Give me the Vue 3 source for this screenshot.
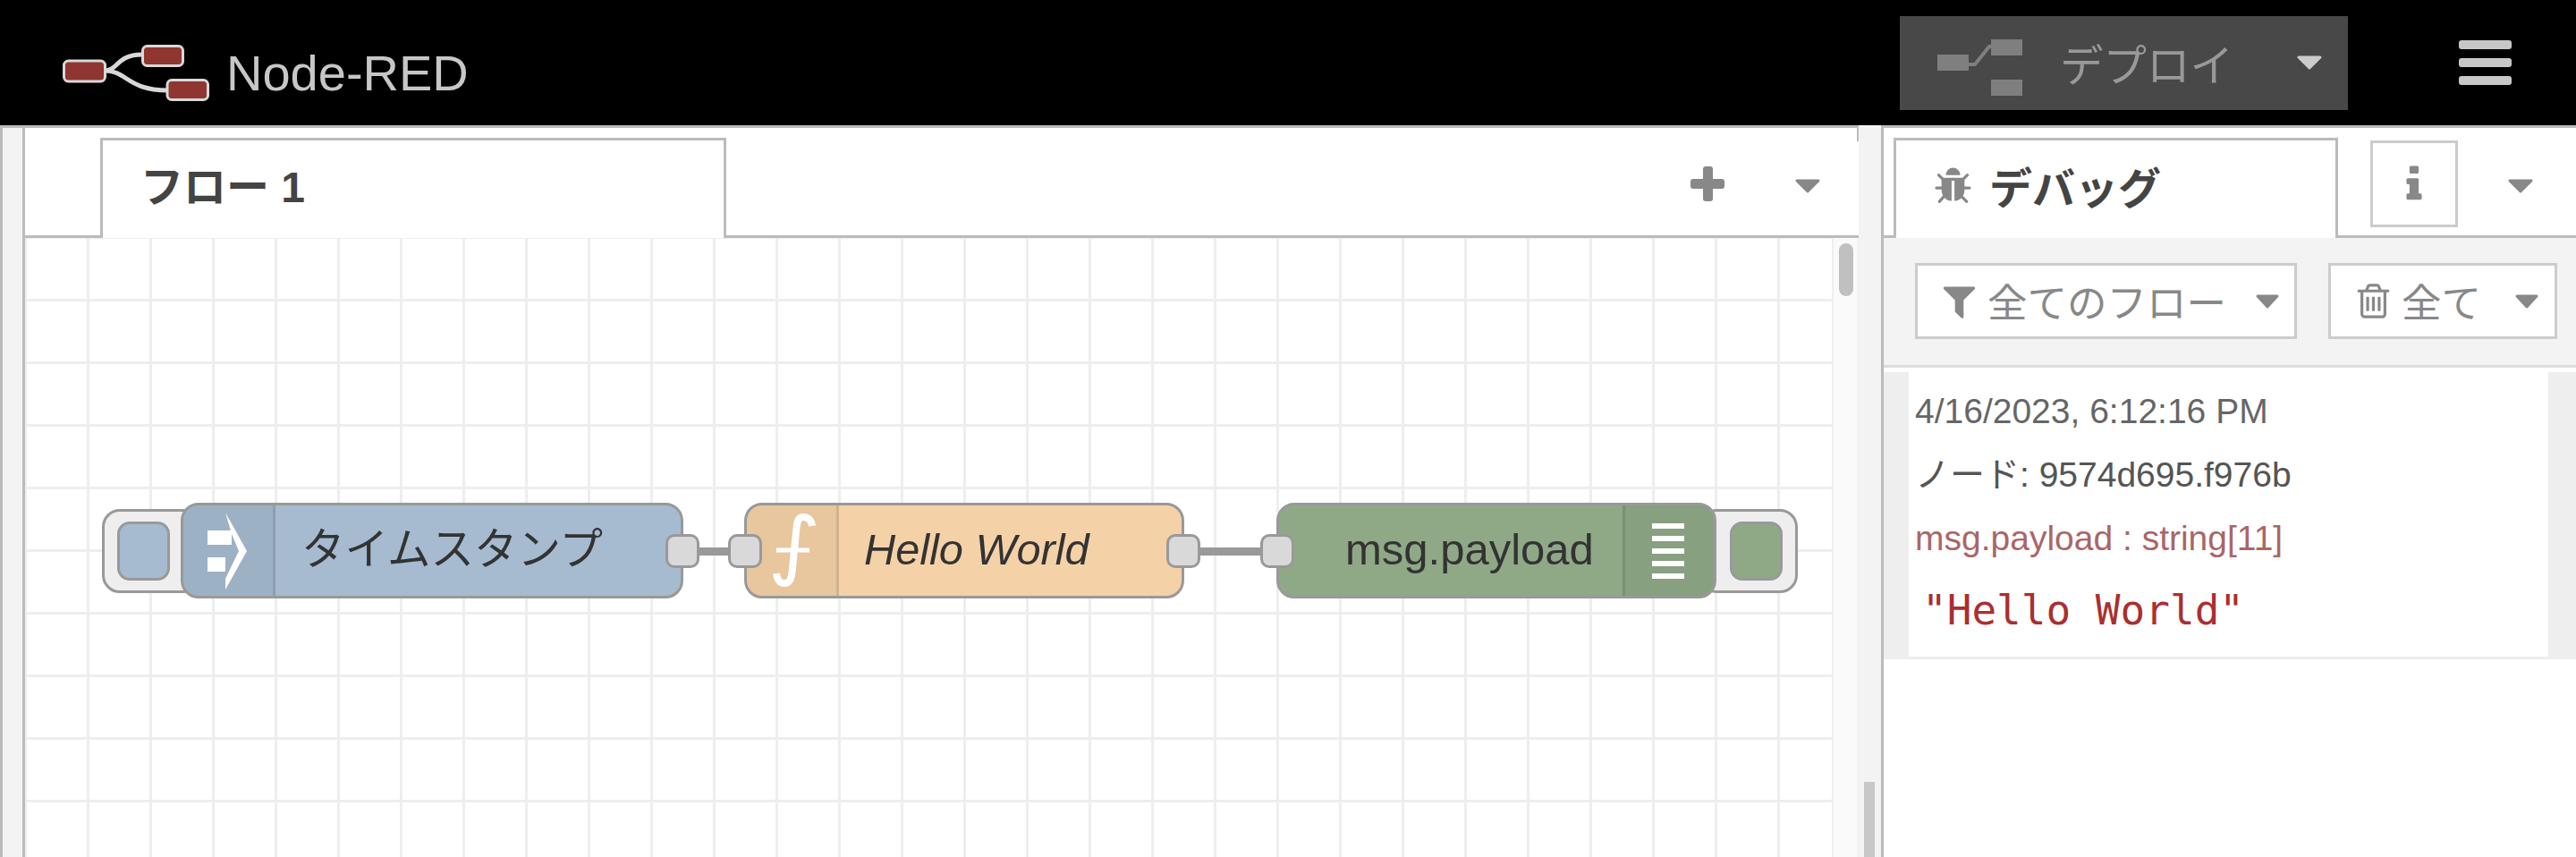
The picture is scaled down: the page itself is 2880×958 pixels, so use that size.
<template>
  <div class="app">
    <header class="header">
      <div class="logo">
        <svg class="logo-mark" viewBox="0 0 164 63" width="164" height="63">
          <path d="M47 29 C62 29 60 11 89 11" fill="none" stroke="#d8d8d8" stroke-width="5" />
          <path d="M47 29 C72 29 72 51 118 51" fill="none" stroke="#d8d8d8" stroke-width="5" />
          <rect x="1.5" y="18" width="46" height="23" rx="5" fill="#8f3631" stroke="#d8d8d8" stroke-width="3" />
          <rect x="89.500" y="1.500" width="45" height="22" rx="5" fill="#8f3631" stroke="#d8d8d8" stroke-width="3" />
          <rect x="117" y="39.500" width="45.500" height="22" rx="5" fill="#8f3631" stroke="#d8d8d8" stroke-width="3" />
        </svg>
        <span class="logo-text">Node-RED</span>
      </div>
      <div class="deploy">
        <svg class="deploy-icon" viewBox="0 0 95 63" width="95" height="63">
          <rect x="0" y="17" width="35" height="18" fill="#7f7f7f" />
          <rect x="60" y="0" width="35" height="18" fill="#7f7f7f" />
          <rect x="60" y="45" width="35" height="18" fill="#7f7f7f" />
          <path d="M35 28 H42 L58 8 H62" fill="none" stroke="#7f7f7f" stroke-width="4" />
        </svg>
        <span class="deploy-label">デプロイ</span>
        <svg class="caret deploy-caret" viewBox="0 0 28 16" width="28" height="16"><path d="M2 2 H26 L14 14 Z" fill="#ccc" stroke="#ccc" stroke-width="3" stroke-linejoin="round" /></svg>
      </div>
      <div class="menu">
        <span></span>
        <span></span>
        <span></span>
      </div>
    </header>

    <main class="main">
      <div class="palette-strip"></div>

      <section class="workspace">
        <div class="tabbar">
          <div class="tab">フロー 1</div>
          <svg class="add" viewBox="0 0 38 39" width="38" height="39">
            <rect x="14" y="0" width="11" height="39" rx="3" fill="#888" />
            <rect x="0" y="14" width="38" height="11" rx="3" fill="#888" />
          </svg>
          <svg class="caret tab-caret" viewBox="0 0 28 16" width="28" height="16"><path d="M2 2 H26 L14 14 Z" fill="#888" stroke="#888" stroke-width="3" stroke-linejoin="round" /></svg>
        </div>
        <div class="canvas-row">
          <div class="chart">
            <div class="wire wire-a"></div>
            <div class="wire wire-b"></div>

            <div class="side-btn inject-btn"><div class="side-btn-inner blue"></div></div>
            <div class="node inject">
              <div class="node-icon">
                <svg viewBox="0 0 102 101" width="102" height="101">
                  <rect x="27" y="28" width="27" height="16" fill="#fff" />
                  <rect x="27" y="58" width="20" height="16" fill="#fff" />
                  <polygon points="47,8 71,51 47,94 47,82 62,51 54,32" fill="#fff" />
                </svg>
              </div>
              <div class="node-label label-ts">タイムスタンプ</div>
              <div class="port port-out"></div>
            </div>

            <div class="node func">
              <div class="port port-in"></div>
              <div class="node-icon">
                <svg viewBox="0 0 102 101" width="102" height="101">
                  <path d="M73 23 C72 14 66 13 63 13 C57 13 56 18 55 30 L51 70 C50 82 48 87 42 87 C36 87 34 83 33 76" fill="none" stroke="#fff" stroke-width="8" />
                  <path d="M33 50 H70" fill="none" stroke="#fff" stroke-width="5" />
                </svg>
              </div>
              <div class="node-label label-fn">Hello World</div>
              <div class="port port-out"></div>
            </div>

            <div class="side-btn debug-btn"><div class="side-btn-inner green"></div></div>
            <div class="node debug">
              <div class="port port-in"></div>
              <div class="node-label label-dbg">msg.payload</div>
              <div class="node-icon">
                <svg viewBox="0 0 36 62" width="36" height="62">
                  <rect x="0" y="0" width="36" height="6" fill="#fff" />
                  <rect x="0" y="14" width="36" height="6" fill="#fff" />
                  <rect x="0" y="28" width="36" height="6" fill="#fff" />
                  <rect x="0" y="42" width="36" height="6" fill="#fff" />
                  <rect x="0" y="56" width="36" height="6" fill="#fff" />
                </svg>
              </div>
            </div>
          </div>
          <div class="scroll-col">
            <div class="scroll-thumb"></div>
          </div>
        </div>
      </section>

      <div class="separator">
        <div class="separator-handle"></div>
      </div>

      <aside class="sidebar">
        <div class="side-tabs">
          <div class="side-tab">
            <svg viewBox="0 0 1792 1792" width="45" height="45"><path fill="#888" d="M1696 960q0 26-19 45t-45 19h-224q0 171-67 290l208 209q19 19 19 45t-19 45q-18 19-45 19t-45-19l-198-197q-5 5-15 13t-42 28.500-65 36.500-82 29-97 13v-896h-128v896q-51 0-101.500-13.500t-87-33-66-39-43.500-32.500l-15-14-183 207q-20 21-48 21-24 0-43-16-19-18-20.500-44.500t15.500-46.500l202-227q-58-114-58-274h-224q-26 0-45-19t-19-45 19-45 45-19h224v-294l-173-173q-19-19-19-45t19-45 45-19 45 19l173 173h844l173-173q19-19 45-19t45 19 19 45-19 45l-173 173v294h224q26 0 45 19t19 45zm-480-576h-640q0-133 93.500-226.500t226.500-93.500 226.500 93.500 93.500 226.500z" /></svg>
            <span>デバッグ</span>
          </div>
          <div class="info-tab">
            <svg viewBox="0 0 1792 1792" width="48" height="48"><path fill="#888" d="M1216 1344v128q0 26-19 45t-45 19h-512q-26 0-45-19t-19-45v-128q0-26 19-45t45-19h64v-384h-64q-26 0-45-19t-19-45v-128q0-26 19-45t45-19h384q26 0 45 19t19 45v576h64q26 0 45 19t19 45zm-128-1152v192q0 26-19 45t-45 19h-256q-26 0-45-19t-19-45v-192q0-26 19-45t45-19h256q26 0 45 19t19 45z" /></svg>
          </div>
          <svg class="caret side-caret" viewBox="0 0 28 16" width="28" height="16"><path d="M2 2 H26 L14 14 Z" fill="#888" stroke="#888" stroke-width="3" stroke-linejoin="round" /></svg>
        </div>

        <div class="toolbar">
          <button class="tool-btn filter-btn">
            <svg viewBox="0 0 1792 1792" width="45" height="45"><path fill="#888" d="M1595 295q17 41-14 70l-493 493v742q0 42-39 59-13 5-25 5-27 0-45-19l-256-256q-19-19-19-45v-486l-493-493q-31-29-14-70 17-39 59-39h1280q42 0 59 39z" /></svg>
            <span>全てのフロー</span>
            <svg class="caret" viewBox="0 0 26 16" width="26" height="16"><path d="M2 2 H24 L13 14 Z" fill="#888" stroke="#888" stroke-width="3" stroke-linejoin="round" /></svg>
          </button>
          <button class="tool-btn clear-btn">
            <svg viewBox="0 0 1792 1792" width="45" height="45"><path fill="#888" d="M704 736v576q0 14-9 23t-23 9h-64q-14 0-23-9t-9-23v-576q0-14 9-23t23-9h64q14 0 23 9t9 23zm256 0v576q0 14-9 23t-23 9h-64q-14 0-23-9t-9-23v-576q0-14 9-23t23-9h64q14 0 23 9t9 23zm256 0v576q0 14-9 23t-23 9h-64q-14 0-23-9t-9-23v-576q0-14 9-23t23-9h64q14 0 23 9t9 23zm128 724v-948h-896v948q0 22 7 40.500t14.500 27 10.500 8.500h832q3 0 10.500-8.500t14.500-27 7-40.500zm-672-1076h448l-48-117q-7-9-17-11h-317q-10 2-17 11zm928 32v64q0 14-9 23t-23 9h-96v948q0 83-47 143.500t-113 60.500h-832q-66 0-113-58.500t-47-141.500v-952h-96q-14 0-23-9t-9-23v-64q0-14 9-23t23-9h309l70-167q15-37 54-63t79-26h320q40 0 79 26t54 63l70 167h309q14 0 23 9t9 23z" /></svg>
            <span>全て</span>
            <svg class="caret" viewBox="0 0 26 16" width="26" height="16"><path d="M2 2 H24 L13 14 Z" fill="#888" stroke="#888" stroke-width="3" stroke-linejoin="round" /></svg>
          </button>
        </div>

        <div class="messages">
          <div class="msg">
            <div class="msg-line msg-date">4/16/2023, 6:12:16 PM</div>
            <div class="msg-line msg-node">ノード: 9574d695.f976b</div>
            <div class="msg-line msg-topic">msg.payload : string[11]</div>
            <div class="msg-value">"Hello World"</div>
          </div>
        </div>
      </aside>
    </main>
  </div>
</template>

<script setup>
</script>

<style scoped>
.app {
  width: 2880px;
  height: 958px;
  display: flex;
  flex-direction: column;
  overflow: hidden;
  font-family: "Liberation Sans", "Noto Sans CJK JP", sans-serif;
}

/* header */
.header {
  height: 140px;
  flex: none;
  background: #000;
  display: flex;
  align-items: center;
}

.logo {
  display: flex;
  align-items: center;
  margin-left: 70px;
  padding-top: 23px;
}

.logo-text {
  margin-left: 19px;
  font-size: 56px;
  color: #c7c7c7;
}

.deploy {
  margin-left: auto;
  width: 501px;
  height: 105px;
  background: #484848;
  display: flex;
  align-items: center;
  padding-left: 42px;
  box-sizing: border-box;
}

.deploy-icon {
  margin-top: 10px;
}

.deploy-label {
  margin-left: 42px;
  font-size: 48.500px;
  color: #999;
}

.deploy-caret {
  margin-left: auto;
  margin-right: 29px;
}

.caret {
  flex: none;
  display: block;
}

.menu {
  margin-left: 124px;
  margin-right: 72px;
  display: flex;
  flex-direction: column;
  gap: 10px;
}

.menu span {
  width: 59px;
  height: 10px;
  border-radius: 3px;
  background: #c7c7c7;
}

/* main area */
.main {
  flex: 1;
  display: flex;
  min-height: 0;
}

.palette-strip {
  width: 28px;
  flex: none;
  box-sizing: border-box;
  background: #f3f3f3;
  border-top: 3px solid #bbb;
  border-left: 3px solid #bbb;
  border-right: 3px solid #bbb;
}

.workspace {
  width: 2050px;
  flex: none;
  display: flex;
  flex-direction: column;
  border-top: 3px solid #bbb;
  box-sizing: border-box;
}

.tabbar {
  height: 123px;
  flex: none;
  box-sizing: border-box;
  border-bottom: 3px solid #bbb;
  display: flex;
  align-items: flex-start;
  position: relative;
}

.tabbar::after {
  content: "";
  position: absolute;
  right: 0;
  top: 0;
  width: 2px;
  height: 15px;
  background: #bbb;
}

.tab {
  margin-left: 84px;
  margin-top: 11px;
  width: 700px;
  height: 112px;
  flex: none;
  box-sizing: border-box;
  background: #fff;
  border: 3px solid #bbb;
  border-bottom: none;
  padding-left: 42px;
  line-height: 106px;
  font-size: 48px;
  font-weight: bold;
  color: #444;
}

.add {
  margin-left: 1078px;
  margin-top: 43px;
  flex: none;
}

.tab-caret {
  margin-left: 79px;
  margin-top: 57px;
}

.canvas-row {
  flex: 1;
  display: flex;
  min-height: 0;
}

.chart {
  width: 2020px;
  flex: none;
  position: relative;
  overflow: hidden;
  background-color: #fff;
  background-image: linear-gradient(#eee 3px, transparent 3px), linear-gradient(90deg, #eee 3px, transparent 3px);
  background-size: 70px 70px;
  background-position: 69px 68px;
}

.scroll-col {
  flex: 1;
  position: relative;
  box-sizing: border-box;
  background: #fafafa;
  border-left: 2px solid #eee;
  border-right: 2px solid #f3f3f3;
}

.scroll-thumb {
  position: absolute;
  left: 6px;
  top: 6px;
  width: 16px;
  height: 59px;
  border-radius: 8px;
  background: #c0c0c0;
}

/* nodes, placed on the flow canvas */
.wire {
  position: absolute;
  height: 9px;
  top: 346px;
  background: #999;
}

.wire-a {
  left: 754px;
  width: 60px;
}

.wire-b {
  left: 1314px;
  width: 96px;
}

.node {
  position: absolute;
  top: 296px;
  height: 107px;
  box-sizing: border-box;
  border: 3px solid #999;
  border-radius: 20px;
  display: flex;
  color: #333;
  font-size: 49px;
}

.node.inject {
  left: 174px;
  width: 562px;
  background: #a6bbcf;
}

.node.func {
  left: 804px;
  width: 492px;
  background: #f5d1a7;
}

.node.debug {
  left: 1399px;
  width: 492px;
  background: #8fa987;
}

.node-icon {
  width: 100px;
  flex: none;
  background: rgba(0, 0, 0, 0.05);
  border-right: 3px solid rgba(0, 0, 0, 0.1);
  border-radius: 17px 0 0 17px;
  display: flex;
  align-items: center;
}

.node-icon svg {
  flex: none;
}

.debug .node-icon {
  width: 99px;
  margin-left: auto;
  justify-content: center;
  border-right: none;
  border-left: 3px solid rgba(0, 0, 0, 0.1);
  border-radius: 0 17px 17px 0;
}

.debug .node-icon svg {
  margin-right: 4px;
}

.node-label {
  line-height: 99px;
  white-space: nowrap;
}

.label-ts {
  padding-left: 29px;
  font-size: 48.500px;
}

.label-fn {
  padding-left: 28px;
  font-size: 48.700px;
  font-style: italic;
}

.label-dbg {
  padding-left: 74px;
}

.port {
  position: absolute;
  top: 32px;
  width: 38px;
  height: 38px;
  box-sizing: border-box;
  background: #d9d9d9;
  border: 3px solid #999;
  border-radius: 10px;
}

.inject .port-out {
  left: 539px;
}

.func .port-out {
  left: 469px;
}

.port-in {
  left: -21px;
}

.side-btn {
  position: absolute;
  top: 303px;
  height: 94px;
  width: 110px;
  box-sizing: border-box;
  background: #eee;
  border: 3px solid #999;
  border-radius: 20px;
}

.inject-btn {
  left: 86px;
}

.debug-btn {
  left: 1872px;
}

.side-btn-inner {
  position: absolute;
  top: 11px;
  width: 59px;
  height: 66px;
  box-sizing: border-box;
  border: 3px solid #999;
  border-radius: 14px;
}

.inject-btn .side-btn-inner {
  left: 14px;
}

.debug-btn .side-btn-inner {
  left: 31px;
}

.blue {
  background: #a6bbcf;
}

.green {
  background: #8fa987;
}

/* separator */
.separator {
  width: 25px;
  flex: none;
  position: relative;
  background: #f3f3f3;
}

.separator-handle {
  position: absolute;
  left: 6px;
  top: 734px;
  bottom: 0;
  width: 12px;
  background: #c8c8c8;
}

/* sidebar */
.sidebar {
  flex: 1;
  display: flex;
  flex-direction: column;
  box-sizing: border-box;
  border-top: 3px solid #bbb;
  border-left: 3px solid #bbb;
  background: #fff;
}

.side-tabs {
  height: 123px;
  flex: none;
  box-sizing: border-box;
  border-bottom: 3px solid #bbb;
  display: flex;
  align-items: flex-start;
}

.side-tab {
  margin-left: 11px;
  margin-top: 11px;
  width: 497px;
  height: 112px;
  flex: none;
  box-sizing: border-box;
  background: #fff;
  border: 3px solid #bbb;
  border-bottom: none;
  padding-left: 41px;
  padding-bottom: 6px;
  display: flex;
  align-items: center;
  gap: 18px;
  font-size: 48px;
  font-weight: bold;
  color: #444;
}

.side-tab span {
  margin-top: -4px;
}

.info-tab {
  margin-left: 36px;
  margin-top: 14px;
  width: 98px;
  height: 97px;
  flex: none;
  box-sizing: border-box;
  border: 3px solid #ccc;
  display: flex;
  align-items: center;
  justify-content: center;
}

.side-caret {
  margin-left: 56px;
  margin-top: 57px;
}

.toolbar {
  height: 145px;
  flex: none;
  box-sizing: border-box;
  background: #f3f3f3;
  border-bottom: 3px solid #ddd;
  padding: 28px 0 0 35px;
  display: flex;
  align-items: flex-start;
  gap: 35px;
}

.tool-btn {
  height: 85px;
  box-sizing: border-box;
  background: #fff;
  border: 3px solid #ccc;
  padding: 0;
  display: flex;
  align-items: center;
  font-family: inherit;
  font-size: 44.500px;
  color: #888;
}

.filter-btn {
  width: 427px;
  padding-left: 24px;
}

.clear-btn {
  width: 256px;
  padding-left: 25px;
}

.tool-btn span {
  margin-left: 9px;
  margin-top: -2px;
}

.tool-btn .caret {
  margin-left: auto;
  margin-right: 17px;
}

.clear-btn .caret {
  margin-right: 18px;
}

.messages {
  margin-top: 5px;
  background: #eee;
  border-bottom: 3px solid #eee;
  padding: 0 31px 0 28px;
}

.msg {
  background: #fff;
  height: 318px;
  box-sizing: border-box;
  padding: 8px 0 0 7px;
}

.msg-line {
  font-size: 39px;
  line-height: 71px;
  white-space: nowrap;
}

.msg-date {
  color: #666;
}

.msg-node {
  color: #555;
}

.msg-topic {
  color: #a66;
}

.msg-value {
  margin-top: 15px;
  padding-left: 8px;
  font-family: "DejaVu Sans Mono", monospace;
  font-size: 46px;
  line-height: 60px;
  color: #aa2f2f;
}
</style>

<style>
html,
body {
  margin: 0;
  background: #fff;
  overflow: hidden;
}
</style>
